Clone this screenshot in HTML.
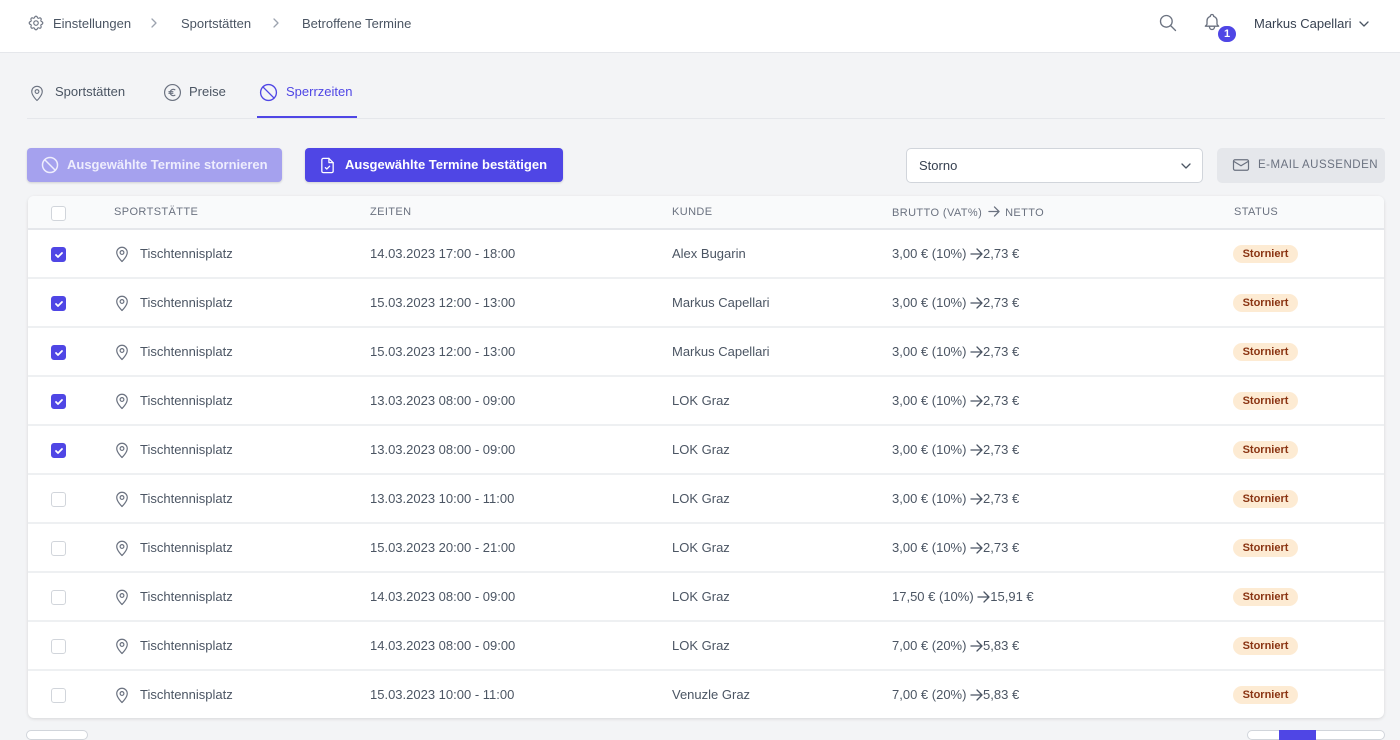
<!DOCTYPE html>
<html><head><meta charset="utf-8"><style>
*{box-sizing:border-box;margin:0;padding:0}
body{width:1400px;height:735px;overflow:hidden;background:#f3f4f6;font-family:"Liberation Sans",sans-serif;color:#4b5563;font-size:13px;position:relative}
.hdr{position:absolute;left:0;top:0;width:1400px;height:53px;background:#fff;border-bottom:1px solid #e5e7eb}
.a{position:absolute;white-space:nowrap}
svg{position:absolute;fill:none;stroke-linecap:round;stroke-linejoin:round}
.btn{position:absolute;height:34px;border-radius:4px;color:#fff;font-weight:bold;font-size:13px;line-height:34px;box-shadow:0 1px 2px rgba(0,0,0,.15)}
.card{position:absolute;left:28px;top:196px;width:1356px;height:522px;background:#fff;border-radius:6px;box-shadow:0 1px 3px rgba(0,0,0,.12);overflow:hidden}
.th{position:absolute;left:0;top:0;width:100%;height:34px;background:#f9fafb;border-bottom:2px solid #e5e7eb;font-size:11px;letter-spacing:.4px;color:#6b7280}
.th span{position:absolute;top:10px;white-space:nowrap}
.row{position:absolute;left:0;width:100%;height:49px;border-bottom:2px solid #eef0f2}
.row span{position:absolute;top:16px;white-space:nowrap}
.cb{position:absolute;left:23px;top:17px;width:15px;height:15px;border-radius:3px;border:1px solid #d1d5db;background:#fff}
.cb.on{background:#4f46e5;border-color:#4f46e5}
.badge{position:absolute;left:1205px;top:15px;width:65px;height:18px;border-radius:9px;background:#fdebd3;color:#8a3412;font-size:11px;font-weight:bold;text-align:center;line-height:18px}
</style></head><body>
<div class="hdr">
<svg style="left:27px;top:14px" width="18" height="18" viewBox="0 0 24 24" stroke="#6b7280" stroke-width="1.5"><path d="M10.3 4.3c.4-1.8 3-1.8 3.4 0a1.7 1.7 0 002.6 1.1c1.5-.9 3.3.8 2.4 2.4a1.7 1.7 0 001 2.5c1.8.4 1.8 3 0 3.4a1.7 1.7 0 00-1 2.6c.9 1.5-.9 3.3-2.4 2.4a1.7 1.7 0 00-2.6 1c-.4 1.8-3 1.8-3.4 0a1.7 1.7 0 00-2.5-1c-1.6.9-3.3-.9-2.4-2.4a1.7 1.7 0 00-1.1-2.6c-1.8-.4-1.8-3 0-3.4a1.7 1.7 0 001.1-2.5c-.9-1.6.8-3.3 2.4-2.4a1.7 1.7 0 002.5-1.1z"/><circle cx="12" cy="12" r="3"/></svg>
<span class="a" style="left:53px;top:16px">Einstellungen</span>
<svg style="left:149px;top:17px" width="10" height="12" viewBox="0 0 10 12" stroke="#9ca3af" stroke-width="1.3"><path d="M3 2l4 4-4 4"/></svg>
<span class="a" style="left:181px;top:16px">Sportstätten</span>
<svg style="left:271px;top:17px" width="10" height="12" viewBox="0 0 10 12" stroke="#9ca3af" stroke-width="1.3"><path d="M3 2l4 4-4 4"/></svg>
<span class="a" style="left:302px;top:16px">Betroffene Termine</span>
<svg style="left:1158px;top:13px" width="20" height="20" viewBox="0 0 24 24" stroke="#6b7280" stroke-width="1.6"><circle cx="10" cy="10" r="7"/><path d="M15 15l6 6"/></svg>
<svg style="left:1202px;top:12px" width="20" height="20" viewBox="0 0 24 24" stroke="#6b7280" stroke-width="1.6"><path d="M15 17h5l-1.4-1.4A2 2 0 0118 14.2V11a6 6 0 00-4-5.7V5a2 2 0 10-4 0v.3A6 6 0 006 11v3.2c0 .5-.2 1-.6 1.4L4 17h5m6 0v1a3 3 0 11-6 0v-1m6 0H9"/></svg>
<div class="a" style="left:1218px;top:26px;width:18px;height:16px;border-radius:8px;background:#4f46e5;color:#fff;font-size:11px;font-weight:bold;text-align:center;line-height:16px">1</div>
<span class="a" style="left:1254px;top:16px;color:#374151">Markus Capellari</span>
<svg style="left:1358px;top:18px" width="12" height="12" viewBox="0 0 12 12" stroke="#4b5563" stroke-width="1.3"><path d="M2 4l4 4 4-4"/></svg>
</div>
<svg style="left:28px;top:83px" width="18" height="20" viewBox="0 0 24 24" stroke="#6b7280" stroke-width="1.5"><path d="M12 22s-7-6.5-7-12a7 7 0 0114 0c0 5.5-7 12-7 12z"/><circle cx="12" cy="10" r="2.5"/></svg>
<span class="a" style="left:55px;top:84px">Sportstätten</span>
<svg style="left:163px;top:83px" width="19" height="19" viewBox="0 0 24 24" stroke="#6b7280" stroke-width="1.5"><circle cx="12" cy="12" r="10"/><path d="M15 8.5a4 4 0 100 7M7.5 11h5M7.5 13h5"/></svg>
<span class="a" style="left:189px;top:84px">Preise</span>
<svg style="left:259px;top:83px" width="19" height="19" viewBox="0 0 24 24" stroke="#4f46e5" stroke-width="1.7"><circle cx="12" cy="12" r="10"/><path d="M5 5l14 14"/></svg>
<span class="a" style="left:286px;top:84px;color:#4f46e5">Sperrzeiten</span>
<div class="a" style="left:27px;top:118px;width:1358px;height:1px;background:#e5e7eb"></div>
<div class="a" style="left:257px;top:116px;width:100px;height:2px;background:#4f46e5"></div>
<div class="btn" style="left:27px;top:148px;width:255px;background:#a5a1ee;color:#eeedfd">
<svg style="left:14px;top:8px" width="18" height="18" viewBox="0 0 24 24" stroke="#eeedfd" stroke-width="2"><circle cx="12" cy="12" r="10"/><path d="M5 5l14 14"/></svg>
<span class="a" style="left:40px">Ausgewählte Termine stornieren</span></div>
<div class="btn" style="left:305px;top:148px;width:258px;background:#4f46e5">
<svg style="left:14px;top:8px" width="17" height="19" viewBox="0 0 24 24" stroke="#fff" stroke-width="1.8"><path d="M14 2H6a2 2 0 00-2 2v16a2 2 0 002 2h12a2 2 0 002-2V8z"/><path d="M14 2v6h6M9 15l2 2 4-4"/></svg>
<span class="a" style="left:40px">Ausgewählte Termine bestätigen</span></div>
<div class="a" style="left:906px;top:148px;width:297px;height:35px;background:#fff;border:1px solid #d1d5db;border-radius:5px">
<span class="a" style="left:12px;top:9px;color:#374151">Storno</span>
<svg style="left:273px;top:11px" width="12" height="12" viewBox="0 0 12 12" stroke="#4b5563" stroke-width="1.3"><path d="M2 4l4 4 4-4"/></svg></div>
<div class="a" style="left:1217px;top:148px;width:168px;height:35px;background:#e5e7eb;border-radius:5px">
<svg style="left:15px;top:9px" width="18" height="16" viewBox="0 0 24 20" stroke="#6b7280" stroke-width="1.6"><rect x="2" y="3" width="20" height="14" rx="2"/><path d="M2 5l10 6 10-6"/></svg>
<span class="a" style="left:41px;top:11px;font-size:11.5px;letter-spacing:.5px;color:#6b7280">E-MAIL AUSSENDEN</span></div>
<div class="card">
<div class="th"><div class="cb" style="top:10px;left:23px"></div><span style="left:86px">SPORTSTÄTTE</span><span style="left:342px">ZEITEN</span><span style="left:644px">KUNDE</span><span style="left:864px">BRUTTO (VAT%) <svg style="position:relative;display:inline-block;vertical-align:-1px;margin:0 2px" width="12" height="11" viewBox="0 0 13 12" stroke="#6b7280" stroke-width="1.4"><path d="M1 6h11M7 1l5 5-5 5"/></svg> NETTO</span><span style="left:1206px">STATUS</span></div>
<div id="rows"></div>
</div>
<div class="a" style="left:26px;top:730px;width:62px;height:10px;background:#fff;border:1px solid #d1d5db;border-radius:5px"></div>
<div class="a" style="left:1247px;top:730px;width:138px;height:10px;background:#fff;border:1px solid #d1d5db;border-radius:5px"></div>
<div class="a" style="left:1279px;top:730px;width:37px;height:10px;background:#4f46e5"></div>
<script>
const d=[[1,"14.03.2023 17:00 - 18:00","Alex Bugarin","3,00 € (10%)","2,73 €"],[1,"15.03.2023 12:00 - 13:00","Markus Capellari","3,00 € (10%)","2,73 €"],[1,"15.03.2023 12:00 - 13:00","Markus Capellari","3,00 € (10%)","2,73 €"],[1,"13.03.2023 08:00 - 09:00","LOK Graz","3,00 € (10%)","2,73 €"],[1,"13.03.2023 08:00 - 09:00","LOK Graz","3,00 € (10%)","2,73 €"],[0,"13.03.2023 10:00 - 11:00","LOK Graz","3,00 € (10%)","2,73 €"],[0,"15.03.2023 20:00 - 21:00","LOK Graz","3,00 € (10%)","2,73 €"],[0,"14.03.2023 08:00 - 09:00","LOK Graz","17,50 € (10%)","15,91 €"],[0,"14.03.2023 08:00 - 09:00","LOK Graz","7,00 € (20%)","5,83 €"],[0,"15.03.2023 10:00 - 11:00","Venuzle Graz","7,00 € (20%)","5,83 €"]];
let h="";d.forEach((r,i)=>{h+=`<div class="row" style="top:${34+i*49}px"><div class="cb${r[0]?' on':''}">${r[0]?'<svg style="left:2px;top:2px" width="10" height="10" viewBox="0 0 10 10" stroke="#fff" stroke-width="1.8"><path d="M2 5l2 2 4-4"/></svg>':''}</div><svg style="left:85px;top:14px" width="18" height="20" viewBox="0 0 24 24" stroke="#6b7280" stroke-width="1.6"><path d="M12 22s-7-6.5-7-12a7 7 0 0114 0c0 5.5-7 12-7 12z"/><circle cx="12" cy="10" r="2.5"/></svg><span style="left:112px">Tischtennisplatz</span><span style="left:342px">${r[1]}</span><span style="left:644px">${r[2]}</span><span style="left:864px">${r[3]} <svg style="position:relative;display:inline-block;vertical-align:-2px" width="13" height="12" viewBox="0 0 13 12" stroke="#4b5563" stroke-width="1.3"><path d="M1 6h11M7 1l5 5-5 5"/></svg>${r[4]}</span><div class="badge">Storniert</div></div>`});
document.getElementById("rows").innerHTML=h;
</script>
</body></html>
